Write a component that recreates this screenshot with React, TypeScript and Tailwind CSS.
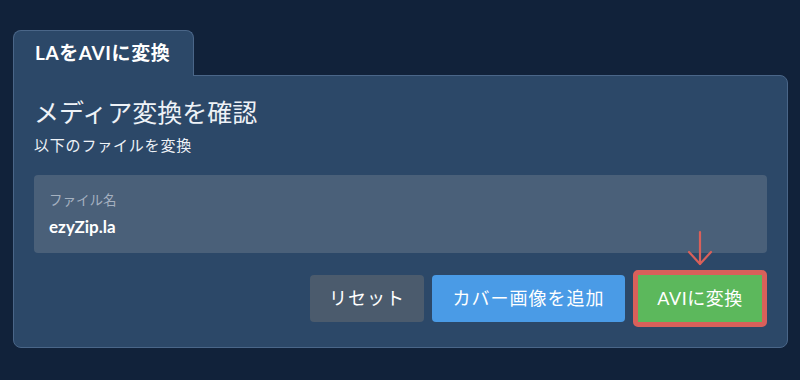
export default function App() {
  return (
    <div
      className="w-[800px] h-[380px] bg-[#11223a] px-[13px] pt-[30px]"
      style={{ fontFamily: 'Lato, "Noto Sans CJK JP", sans-serif' }}
    >
      {/* tab */}
      <div className="relative z-10 w-[181px] h-[46px] -mb-px rounded-t-[8px] border border-b-0 border-[#4a6688] bg-[#2c4868] flex items-center pl-[21px]">
        <span className="text-[19px] font-bold text-white tracking-[0.6px]">LAをAVIに変換</span>
      </div>

      {/* card */}
      <div className="w-[775px] h-[273px] rounded-b-[8px] rounded-tr-[8px] border border-[#4a6688] bg-[#2c4868] px-[20px] pt-[20px]">
        <h1 className="text-[25px] leading-[32px] text-[#eef2f7]">メディア変換を確認</h1>
        <p className="mt-[7px] text-[15px] leading-[20px] text-[#eef2f7] tracking-[0.8px]">以下のファイルを変換</p>

        <div className="mt-[20px] h-[78px] rounded-[4px] bg-[#4a6079] px-[15px] pt-[16px]">
          <div className="text-[13.5px] leading-[18px] text-[#a5b1c0]">ファイル名</div>
          <div className="mt-[8px] text-[17px] leading-[20px] font-bold text-white">ezyZip.la</div>
        </div>

        <div className="mt-[17px] flex justify-end gap-[8px]">
          <button className="mt-[5px] h-[47px] w-[114px] rounded-[4px] bg-[#4b5b6d] text-[18px] tracking-[1px] text-white">
            リセット
          </button>
          <button className="mt-[5px] h-[47px] w-[193px] rounded-[4px] bg-[#4a9be6] text-[18px] tracking-[1px] text-white">
            カバー画像を追加
          </button>
          <div className="relative">
            <svg
              className="absolute left-[54px] -top-[40px]"
              width="26"
              height="38"
              viewBox="0 0 26 38"
              fill="none"
              stroke="#d9605a"
              strokeWidth="2.2"
              strokeLinecap="round"
              strokeLinejoin="round"
            >
              <path d="M13 2 V34" />
              <path d="M2 22 L13 34 L24 22" />
            </svg>
            <button className="h-[57px] w-[134px] rounded-[5px] border-[5px] border-[#d9605a] bg-[#5cb85c] text-[18px] tracking-[0.5px] text-white">
              AVIに変換
            </button>
          </div>
        </div>
      </div>
    </div>
  )
}
